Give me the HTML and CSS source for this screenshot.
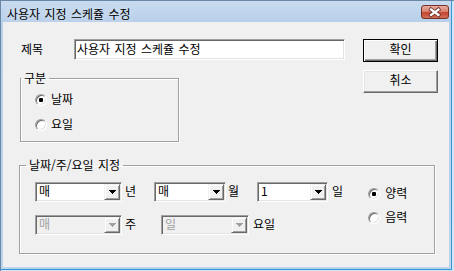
FILE: index.html
```html
<!DOCTYPE html>
<html lang="ko">
<head>
<meta charset="utf-8">
<title>사용자 지정 스케쥴 수정</title>
<link rel="stylesheet" href="styles.css">
</head>
<body>
<div class="window">
  <div class="titlebar">
    <span class="title">사용자 지정 스케쥴 수정</span>
    <span class="close">
      <svg width="28" height="14" viewBox="0 0 28 14">
        <defs>
          <linearGradient id="cg" x1="0" y1="0" x2="0" y2="1">
            <stop offset="0" stop-color="#eab0a3"/>
            <stop offset="0.45" stop-color="#d98573"/>
            <stop offset="0.55" stop-color="#c4452f"/>
            <stop offset="1" stop-color="#d2735a"/>
          </linearGradient>
        </defs>
        <rect x="0.5" y="0.5" width="27" height="13" rx="2.5" fill="url(#cg)" stroke="#74322a"/>
        <path d="M10 4.5 L17.5 10 M17.5 4.5 L10 10" stroke="#6a2e26" stroke-width="3.8" stroke-linecap="square"/>
        <path d="M10 4.5 L17.5 10 M17.5 4.5 L10 10" stroke="#ffffff" stroke-width="2.2" stroke-linecap="square"/>
      </svg>
    </span>
  </div>
  <div class="client">
    <div class="top">
      <div class="left">
        <div class="field-row">
          <span class="field-label">제목</span>
          <div class="textbox">사용자 지정 스케쥴 수정</div>
        </div>
        <fieldset class="group group-kind">
          <legend>구분</legend>
          <div class="radio-list kind-body">
            <label class="radio"><span class="dot checked"></span><span class="rtext">날짜</span></label>
            <label class="radio"><span class="dot"></span><span class="rtext">요일</span></label>
          </div>
        </fieldset>
      </div>
      <div class="buttons">
        <button class="btn default">확인</button>
        <button class="btn">취소</button>
      </div>
    </div>
    <fieldset class="group group-date">
      <legend>날짜/주/요일 지정</legend>
      <div class="date-body">
        <div class="rows">
          <div class="row">
            <div class="combo w87"><span class="combo-text">매</span><span class="combo-btn"><svg width="7" height="4" viewBox="0 0 7 4"><path d="M0 0H7L3.5 4Z" fill="#000" shape-rendering="crispEdges"/></svg></span></div>
            <span class="unit ml3">년</span>
            <div class="combo w72 ml18"><span class="combo-text">매</span><span class="combo-btn"><svg width="7" height="4" viewBox="0 0 7 4"><path d="M0 0H7L3.5 4Z" fill="#000" shape-rendering="crispEdges"/></svg></span></div>
            <span class="unit ml2">월</span>
            <div class="combo w71 ml18"><span class="combo-text">1</span><span class="combo-btn"><svg width="7" height="4" viewBox="0 0 7 4"><path d="M0 0H7L3.5 4Z" fill="#000" shape-rendering="crispEdges"/></svg></span></div>
            <span class="unit ml4">일</span>
          </div>
          <div class="row">
            <div class="combo w87 disabled"><span class="combo-text">매</span><span class="combo-btn"><svg width="7" height="4" viewBox="0 0 7 4"><path d="M0 0H7L3.5 4Z" fill="#a0a0a0" shape-rendering="crispEdges"/></svg></span></div>
            <span class="unit ml3">주</span>
            <div class="combo w88 ml25 disabled"><span class="combo-text">일</span><span class="combo-btn"><svg width="7" height="4" viewBox="0 0 7 4"><path d="M0 0H7L3.5 4Z" fill="#a0a0a0" shape-rendering="crispEdges"/></svg></span></div>
            <span class="unit ml4">요일</span>
          </div>
        </div>
        <div class="radio-list cal">
          <label class="radio"><span class="dot checked"></span><span class="rtext">양력</span></label>
          <label class="radio"><span class="dot"></span><span class="rtext">음력</span></label>
        </div>
      </div>
    </fieldset>
  </div>
</div>
</body>
</html>
```

FILE: styles.css
```css
* { box-sizing: border-box; }
html, body { margin: 0; padding: 0; }
body {
  width: 454px;
  height: 271px;
  overflow: hidden;
  font-family: "Noto Sans CJK KR", "Noto Sans", sans-serif;
  font-size: 12px;
  word-spacing: 1px;
  color: #000;
}
.window {
  width: 454px;
  height: 271px;
  display: flex;
  flex-direction: column;
  padding: 0 5px 4px 3px;
  background: linear-gradient(#c8dbf0, #b9d0ea 22px, #bdd4ed);
  box-shadow: inset 1px 1px 0 #6b87a6, inset -2px -1px 0 #d3e5f6, inset -3px -2px 0 #3596d6;
}
.titlebar {
  height: 22px;
  display: flex;
  justify-content: space-between;
  align-items: flex-start;
  padding-left: 4px;
}
.title {
  margin-top: 7px;
  line-height: 14px;
  white-space: nowrap;
  color: #000;
  text-shadow: 0 0 6px rgba(255,255,255,0.7);
}
.close {
  display: block;
  width: 28px;
  height: 14px;
  margin-top: 5px;
}
.close svg { display: block; }
.client {
  flex: 1;
  background: #f0f0f0;
  padding: 17px 0 0 16px;
}
.top {
  display: flex;
  align-items: flex-start;
}
.left {
  margin-left: 1px;
  width: 326px;
}
.field-row {
  display: flex;
  align-items: center;
  height: 21px;
}
.field-label {
  width: 54px;
  padding-left: 1px;
  line-height: 14px;
  margin-top: -2px;
}
.textbox {
  width: 271px;
  height: 21px;
  border: 1px solid;
  border-color: #a0a0a0 #ffffff #ffffff #a0a0a0;
  box-shadow: inset 1px 1px 0 #696969, inset -1px -1px 0 #e3e3e3;
  background: #fff;
  padding: 0 2px 2px;
  line-height: 17px;
  white-space: nowrap;
}
.group {
  margin: 0;
  padding: 0;
  min-width: 0;
  border: 1px solid #a0a0a0;
  box-shadow: 1px 1px 0 #fff, inset 1px 1px 0 #fff;
}
.group legend {
  padding: 0 3px;
  height: 12px;
  line-height: 12px;
  margin-top: -1px;
}
.group-kind {
  margin-top: 12px;
  width: 159px;
}
.kind-body {
  padding: 8px 0 8px 14px;
}
.radio-list {
  display: flex;
  flex-direction: column;
  gap: 9px;
}
.radio {
  display: flex;
  align-items: center;
  gap: 4px;
  height: 16px;
}
.rtext {
  line-height: 14px;
  margin-top: -2px;
}
.dot {
  position: relative;
  width: 12px;
  height: 12px;
  border-radius: 50%;
  border: 1px solid;
  border-color: #a0a0a0 #ffffff #ffffff #a0a0a0;
  box-shadow: inset 1px 1px 0 #696969, inset -1px -1px 0 #e3e3e3;
  background: #fff;
}
.dot.checked::after {
  content: "";
  position: absolute;
  left: 3px;
  top: 3px;
  width: 4px;
  height: 4px;
  border-radius: 1px;
  background: #000;
}
.buttons {
  margin-left: 17px;
  display: flex;
  flex-direction: column;
  gap: 8px;
}
.btn {
  width: 75px;
  height: 23px;
  margin: 0;
  padding: 0 0 3px;
  font: inherit;
  line-height: 14px;
  color: #000;
  background: #f0f0f0;
  border: 1px solid;
  border-color: #ffffff #696969 #696969 #ffffff;
  box-shadow: inset -1px -1px 0 #a0a0a0, inset 1px 1px 0 #e3e3e3;
}
.btn.default {
  border-color: #000;
  box-shadow: inset 1px 1px 0 #fff, inset -1px -1px 0 #696969, inset -2px -2px 0 #a0a0a0;
}
.group-date {
  margin-top: 17px;
  width: 416px;
}
.group-date legend { margin-left: 6px; }
.date-body {
  display: flex;
  align-items: flex-start;
  padding: 11px 0 18px 15px;
}
.rows {
  display: flex;
  flex-direction: column;
  gap: 13px;
}
.row {
  display: flex;
  align-items: center;
  height: 20px;
}
.combo {
  display: flex;
  height: 20px;
  padding: 1px;
  border: 1px solid;
  border-color: #a0a0a0 #ffffff #ffffff #a0a0a0;
  box-shadow: inset 1px 1px 0 #696969, inset -1px -1px 0 #e3e3e3;
  background: #fff;
}
.combo.disabled {
  background: #f0f0f0;
  color: #a0a0a0;
}
.combo-text {
  flex: 1;
  padding-left: 2px;
  line-height: 14px;
}
.combo-btn {
  width: 16px;
  height: 16px;
  display: flex;
  align-items: center;
  justify-content: center;
  background: #f0f0f0;
  border: 1px solid;
  border-color: #f0f0f0 #696969 #696969 #f0f0f0;
  box-shadow: inset 1px 1px 0 #fff, inset -1px -1px 0 #a0a0a0;
}
.combo-btn svg { display: block; }
.unit {
  line-height: 14px;
  margin-top: -2px;
  white-space: nowrap;
}
.w87 { width: 87px; }
.w72 { width: 72px; }
.w71 { width: 71px; }
.w88 { width: 88px; }
.ml2 { margin-left: 2px; }
.ml3 { margin-left: 3px; }
.ml4 { margin-left: 4px; }
.ml18 { margin-left: 18px; }
.ml25 { margin-left: 25px; }
.cal {
  margin-left: 25px;
  padding-top: 4px;
  gap: 8px;
}
.cal .radio { gap: 5px; }
```
